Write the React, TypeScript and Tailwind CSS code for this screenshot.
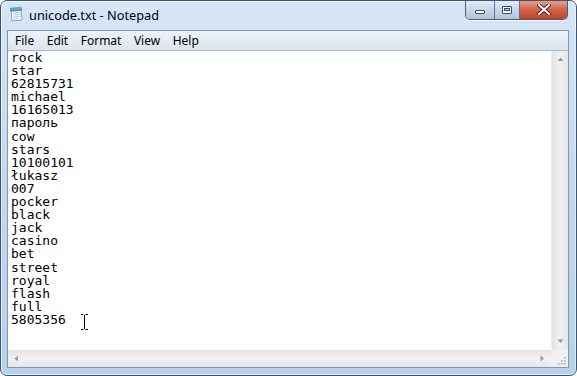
const lines = [
  "rock",
  "star",
  "62815731",
  "michael",
  "16165013",
  "пароль",
  "cow",
  "stars",
  "10100101",
  "łukasz",
  "007",
  "pocker",
  "black",
  "jack",
  "casino",
  "bet",
  "street",
  "royal",
  "flash",
  "full",
  "5805356",
];

const menu = ["File", "Edit", "Format", "View", "Help"];

const NotepadIcon = () => (
  <svg width="16" height="16" viewBox="0 0 16 16">
    {/* page */}
    <path d="M3 3.5 L13 2.5 L14 14 L4 15 Z" fill="#f4f7fb" stroke="#7d8ea3" strokeWidth="0.8" />
    <path d="M5 7 L12 6.3 M5.2 9 L12.2 8.3 M5.4 11 L12.4 10.3 M5.6 13 L11 12.5" stroke="#a9b8c9" strokeWidth="0.7" />
    {/* binding */}
    <path d="M2.6 2.2 L13 1.2 L13.3 4.2 L2.9 5.2 Z" fill="#3c86c9" stroke="#245c93" strokeWidth="0.6" />
    <path d="M4 1.6 L4.2 4.6 M6 1.4 L6.2 4.4 M8 1.2 L8.2 4.2 M10 1 L10.2 4 M12 0.8 L12.2 3.8" stroke="#d8e6f4" strokeWidth="0.6" />
  </svg>
);

const Arrow = ({ dir }: { dir: "up" | "down" | "left" | "right" }) => {
  const d = {
    up: "M0.5 4 L3.5 0.5 L6.5 4 Z",
    down: "M0.5 0.5 L6.5 0.5 L3.5 4 Z",
    left: "M4 0.5 L4 6.5 L0.5 3.5 Z",
    right: "M0.5 0.5 L0.5 6.5 L4 3.5 Z",
  }[dir];
  const vert = dir === "up" || dir === "down";
  return (
    <svg width={vert ? 7 : 5} height={vert ? 5 : 7} viewBox={vert ? "0 0 7 5" : "0 0 5 7"}>
      <path d={d} fill="#9a9a9a" />
    </svg>
  );
};

export default function App() {
  return (
    <div className="w-[577px] h-[376px] bg-white">
      <div
        className="w-[577px] h-[376px] flex flex-col rounded-[7px] border border-[#3d5570] bg-gradient-to-b from-[#d7e6f6] via-[#c2d8ef] to-[#b8d0ea] shadow-[inset_0_0_0_1px_rgba(255,255,255,0.55)] overflow-hidden"
        style={{ fontFamily: "'Noto Sans', 'Liberation Sans', sans-serif" }}
      >
        {/* title bar */}
        <div className="h-[29px] flex items-start shrink-0 pl-[7px] pr-[8px]">
          <div className="pt-[5px]">
            <NotepadIcon />
          </div>
          <span className="ml-[5px] mt-[6px] text-[12.75px] leading-[17px] text-black">
            unicode.txt - Notepad
          </span>
          <div className="ml-auto flex -mt-[1px] h-[20px] rounded-b-[5px] border border-t-0 border-[#4c5f78] overflow-hidden shadow-[0_1px_0_rgba(255,255,255,0.7)]">
            <div className="w-[29px] h-full flex items-end justify-center pb-[5px] bg-gradient-to-b from-[#e4edf7] via-[#cad9ea] to-[#aec3dc] border-r border-[#5d7190]">
              <div className="w-[10px] h-[4px] bg-white border border-[#3b4a5e] rounded-[1px]" />
            </div>
            <div className="w-[25px] h-full flex items-center justify-center bg-gradient-to-b from-[#e4edf7] via-[#cad9ea] to-[#aec3dc] border-r border-[#5d7190]">
              <div className="w-[10px] h-[8px] border border-[#3b4a5e] bg-white rounded-[1px] flex items-center justify-center">
                <div className="w-[6px] h-[3px] border border-[#3b4a5e] bg-[#c6d5e7]" />
              </div>
            </div>
            <div className="w-[47px] h-full flex items-center justify-center bg-gradient-to-b from-[#e8a796] via-[#d2624c] to-[#c24128]">
              <svg width="14" height="11" viewBox="0 0 14 11">
                <path d="M2 1 L12 10 M12 1 L2 10" stroke="#5a2418" strokeWidth="4" strokeLinecap="square" />
                <path d="M2 1 L12 10 M12 1 L2 10" stroke="#ffffff" strokeWidth="2" strokeLinecap="square" />
              </svg>
            </div>
          </div>
        </div>

        {/* client */}
        <div className="flex-1 flex flex-col mb-[7px] ml-[6px] mr-[7px] border border-[#8196b0] bg-white min-h-0">
          {/* menu */}
          <div className="h-[20px] shrink-0 flex items-center pl-[1px] bg-gradient-to-b from-[#eef3fa] to-[#dbe4f1] border-b border-[#a7b6c9] text-[12px] text-black">
            {menu.map((m) => (
              <span key={m} className="px-[6px] leading-[18px] mr-[0.5px]">
                {m}
              </span>
            ))}
          </div>

          {/* edit area */}
          <div className="flex-1 flex min-h-0">
            <div className="relative flex-1 pl-[3px] overflow-hidden">
              <div
                className="text-[13px] leading-[13.1px] text-black whitespace-pre"
                style={{ fontFamily: "'DejaVu Sans Mono', 'Liberation Mono', monospace" }}
              >
                {lines.join("\n")}
              </div>
              {/* I-beam cursor */}
              <svg className="absolute left-[72px] top-[263px]" width="9" height="16" viewBox="0 0 9 16">
                <path d="M1 0.5 H3.5 M5.5 0.5 H8 M4.5 1 V15 M1 15.5 H3.5 M5.5 15.5 H8" stroke="#000" strokeWidth="1" />
              </svg>
            </div>
            {/* vertical scrollbar */}
            <div className="w-[17px] flex flex-col items-center bg-gradient-to-r from-[#e3e3e3] via-[#f1f1f1] to-[#e6e6e6] border-l border-[#ededed]">
              <div className="h-[17px] flex items-center justify-center">
                <Arrow dir="up" />
              </div>
              <div className="flex-1" />
              <div className="h-[17px] flex items-center justify-center">
                <Arrow dir="down" />
              </div>
            </div>
          </div>

          {/* horizontal scrollbar */}
          <div className="h-[17px] shrink-0 flex">
            <div className="flex-1 flex items-center bg-gradient-to-b from-[#e3e3e3] via-[#f1f1f1] to-[#e6e6e6]">
              <div className="w-[17px] flex justify-center">
                <Arrow dir="left" />
              </div>
              <div className="flex-1" />
              <div className="w-[17px] flex justify-center">
                <Arrow dir="right" />
              </div>
            </div>
            <div className="w-[17px] bg-[#f0f0f0] flex items-end justify-end p-[2px]">
              <svg width="10" height="10" viewBox="0 0 10 10">
                {[
                  [8, 2],
                  [5, 5],
                  [8, 5],
                  [2, 8],
                  [5, 8],
                  [8, 8],
                ].map(([x, y], i) => (
                  <rect key={i} x={x} y={y} width="1.5" height="1.5" fill="#a8a8a8" />
                ))}
              </svg>
            </div>
          </div>
        </div>
      </div>
    </div>
  );
}
